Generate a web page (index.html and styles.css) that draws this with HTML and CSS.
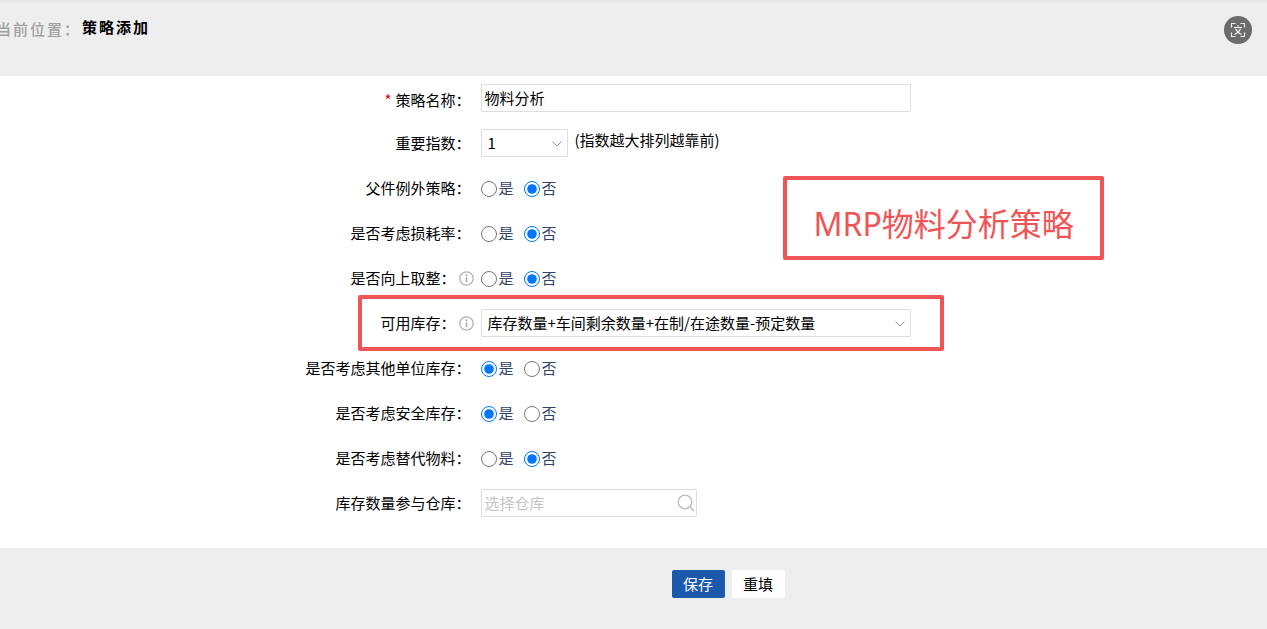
FILE: index.html
```html
<!DOCTYPE html>
<html lang="zh-CN">
<head>
<meta charset="utf-8">
<meta name="viewport" content="width=device-width, initial-scale=1">
<title>策略添加</title>
<link rel="stylesheet" href="styles.css">
</head>
<body>
<header class="topbar">
  <div class="crumb">
    <span class="crumb-label">当前位置：</span>
    <h1 class="crumb-title">策略添加</h1>
  </div>
  <button class="scan" type="button" aria-label="翻译">
    <svg viewBox="0 0 28 28" width="28" height="28" fill="none" stroke="#eee" stroke-width="1.2">
      <path d="M7.500 11.500v-4h4M16.500 7.500h4v4M20.500 16.500v4h-4M11.500 20.500h-4v-4"/>
      <path d="M10 11.500h8M13 10h2M11.500 12.500c1 3 3 4.500 6 6M16.500 12.500c-1 3-3 4.500-6 6"/>
    </svg>
  </button>
</header>

<form class="page">
  <main class="fields">
    <div class="row">
      <label class="name name-first" for="title"><span class="req">*</span>策略名称：</label>
      <div class="control"><input class="text" id="title" type="text" value="物料分析"></div>
    </div>
    <div class="row">
      <label class="name" for="level">重要指数：</label>
      <div class="control">
        <span class="picker picker-small">
          <select id="level"><option>1</option></select>
          <svg class="arrow" viewBox="0 0 10 6" width="10" height="6"><path d="M.5.5 5 5 9.500.5" fill="none" stroke="#999"/></svg>
        </span>
        <span class="hint">(指数越大排列越靠前)</span>
      </div>
    </div>
    <div class="row" role="radiogroup" aria-labelledby="n1">
      <span class="name" id="n1">父件例外策略：</span>
      <div class="control radios">
        <label><input type="radio" name="r1">是</label>
        <label><input type="radio" name="r1" checked>否</label>
      </div>
    </div>
    <div class="row" role="radiogroup" aria-labelledby="n2">
      <span class="name" id="n2">是否考虑损耗率：</span>
      <div class="control radios">
        <label><input type="radio" name="r2">是</label>
        <label><input type="radio" name="r2" checked>否</label>
      </div>
    </div>
    <div class="row" role="radiogroup" aria-labelledby="n3">
      <span class="name with-info"><span id="n3">是否向上取整：</span>
        <svg class="info" viewBox="0 0 15 15" width="15" height="15"><circle cx="7.500" cy="7.500" r="6.700" fill="none" stroke="#b4b4b4" stroke-width="1.300"/><path d="M7.500 6.200v5" stroke="#aaa" stroke-width="1.600"/><circle cx="7.500" cy="4.200" r="1" fill="#aaa"/></svg>
      </span>
      <div class="control radios">
        <label><input type="radio" name="r3">是</label>
        <label><input type="radio" name="r3" checked>否</label>
      </div>
    </div>
    <div class="row">
      <span class="name with-info"><label for="stock">可用库存：</label>
        <svg class="info" viewBox="0 0 15 15" width="15" height="15"><circle cx="7.500" cy="7.500" r="6.700" fill="none" stroke="#b4b4b4" stroke-width="1.300"/><path d="M7.500 6.200v5" stroke="#aaa" stroke-width="1.600"/><circle cx="7.500" cy="4.200" r="1" fill="#aaa"/></svg>
      </span>
      <div class="control">
        <span class="picker">
          <select id="stock"><option>库存数量+车间剩余数量+在制/在途数量-预定数量</option></select>
          <svg class="arrow" viewBox="0 0 10 6" width="10" height="6"><path d="M.5.5 5 5 9.500.5" fill="none" stroke="#999"/></svg>
        </span>
        <span class="mark"></span>
        <strong class="callout">MRP物料分析策略</strong>
      </div>
    </div>
    <div class="row" role="radiogroup" aria-labelledby="n4">
      <span class="name" id="n4">是否考虑其他单位库存：</span>
      <div class="control radios">
        <label><input type="radio" name="r4" checked>是</label>
        <label><input type="radio" name="r4">否</label>
      </div>
    </div>
    <div class="row" role="radiogroup" aria-labelledby="n5">
      <span class="name" id="n5">是否考虑安全库存：</span>
      <div class="control radios">
        <label><input type="radio" name="r5" checked>是</label>
        <label><input type="radio" name="r5">否</label>
      </div>
    </div>
    <div class="row" role="radiogroup" aria-labelledby="n6">
      <span class="name" id="n6">是否考虑替代物料：</span>
      <div class="control radios">
        <label><input type="radio" name="r6">是</label>
        <label><input type="radio" name="r6" checked>否</label>
      </div>
    </div>
    <div class="row">
      <label class="name" for="store">库存数量参与仓库：</label>
      <div class="control">
        <span class="search">
          <input class="text" id="store" type="text" placeholder="选择仓库">
          <svg class="lens" viewBox="0 0 18 18" width="18" height="18" fill="none" stroke="#bbb" stroke-width="1.300"><circle cx="8" cy="8" r="6.800"/><path d="m13 13 4 4"/></svg>
        </span>
      </div>
    </div>
  </main>
  <footer class="actions">
    <button class="btn btn-primary" type="submit">保存</button>
    <button class="btn" type="reset">重填</button>
  </footer>
</form>
</body>
</html>
```
FILE: styles.css
```css
* {
  box-sizing: border-box;
}

body {
  margin: 0;
  min-height: 100vh;
  display: flex;
  flex-direction: column;
  overflow-x: hidden;
  background: #eee;
  color: #000;
  font: 15px/20px "Noto Sans CJK SC", sans-serif;
}

input,
select,
button {
  margin: 0;
  font: inherit;
  color: inherit;
}

.topbar {
  display: flex;
  justify-content: space-between;
  align-items: flex-start;
  padding: 16px 15px 32px 0;
  background: linear-gradient(#e6e6e6, #eee 5px);
}

.crumb {
  display: flex;
  margin-left: -4px;
  font-weight: 700;
  letter-spacing: 2px;
}

.crumb-label {
  padding-top: 3px;
  color: #a0a0a0;
  font-weight: 500;
}

.crumb-title {
  margin: 0;
  padding: 1px 0 0 1px;
  font-size: 15px;
}

.scan {
  display: flex;
  padding: 0;
  border: 0;
  border-radius: 50%;
  background: #6b6b6b;
}

.page {
  display: flex;
  flex-direction: column;
  flex: 1;
}

.fields {
  padding-bottom: 22px;
  background: #fff;
}

.row {
  display: grid;
  grid-template-columns: 38% 1fr;
  align-items: center;
  min-height: 45px;
  padding-bottom: 2px;
}

.name {
  padding-right: 11px;
  text-align: right;
}

.name-first {
  padding-top: 4px;
}

.req {
  margin-right: 4px;
  color: #e60012;
}

.with-info {
  display: flex;
  justify-content: flex-end;
  align-items: center;
  gap: 4px;
  padding-right: 7px;
}

.info {
  margin-top: 2px;
}

.control {
  position: relative;
  display: flex;
  align-items: center;
  gap: 6px;
}

.text,
.picker select {
  width: 100%;
  height: 28px;
  border: 1px solid #dedede;
  border-radius: 1px;
  background: #fff;
  outline: 0;
}

.text {
  max-width: 430px;
  padding: 0 2px;
}

.text::placeholder {
  color: #c4c4c4;
}

.picker {
  position: relative;
  display: flex;
  width: 100%;
  max-width: 430px;
}

.picker-small {
  max-width: 87px;
}

.picker select {
  padding: 0 24px 0 5px;
  appearance: none;
}

.arrow {
  position: absolute;
  right: 6px;
  top: 12px;
  pointer-events: none;
}

.hint {
  padding-bottom: 6px;
}

.radios {
  gap: 11px;
  color: #33446b;
}

.radios label {
  display: flex;
  align-items: center;
  gap: 1px;
}

.radios input {
  width: 16px;
  height: 16px;
  margin-top: 2px;
  accent-color: #0075ff;
}

.search {
  position: relative;
  display: flex;
  width: 216px;
}

.search .text {
  padding-right: 24px;
}

.lens {
  position: absolute;
  right: 2px;
  top: 5px;
}

.mark {
  position: absolute;
  left: -123px;
  top: -14px;
  width: 586px;
  height: 56px;
  border: 4px solid #f05555;
  border-radius: 2px;
  pointer-events: none;
}

.callout {
  position: absolute;
  left: 302px;
  bottom: 77px;
  padding: 24px 26px 12px;
  border: 4px solid #f05555;
  border-radius: 2px;
  color: #f05555;
  font: 400 32px/40px "Noto Sans", "Noto Sans CJK SC", sans-serif;
  white-space: nowrap;
}

.actions {
  display: flex;
  gap: 7px;
  padding: 22px 0 31px 53%;
}

.btn {
  min-width: 53px;
  height: 28px;
  padding: 0 11px;
  border: 0;
  border-radius: 2px;
  background: #fff;
}

.btn-primary {
  background: #1c58ab;
  color: #fff;
}
```
